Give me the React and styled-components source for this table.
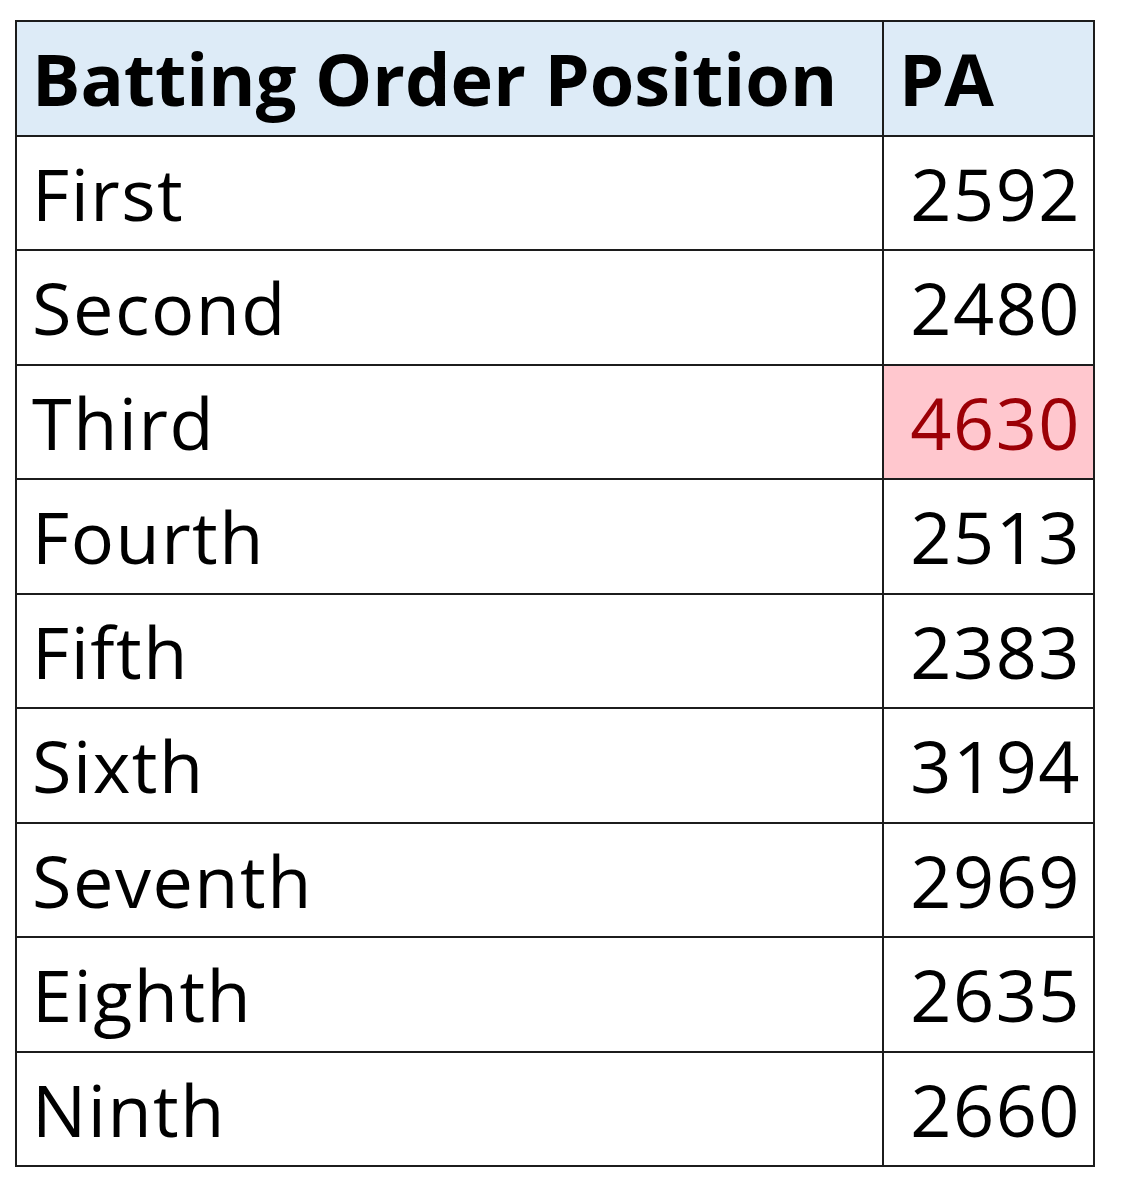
import React from 'react';
import styled, { createGlobalStyle } from 'styled-components';

const GlobalStyle = createGlobalStyle`
  body {
    margin: 0;
    background: #ffffff;
    font-family: 'Open Sans', 'Liberation Sans', sans-serif;
  }
`;

const Page = styled.div`
  padding: 20px 0 0 15px;
`;

const Table = styled.table`
  border-collapse: collapse;
  width: 1080px;
  table-layout: fixed;
`;

const Row = styled.tr`
  height: 114.5px;
`;

const HeadCell = styled.th`
  background: #ddebf7;
  border: 2px solid #1c1c1c;
  font-weight: 700;
  font-size: 72px;
  letter-spacing: 0;
  text-align: left;
  padding: 0 0 0 15px;
  color: #000;
  line-height: 1;
`;

const Cell = styled.td`
  border: 2px solid #1c1c1c;
  font-size: 72px;
  letter-spacing: 1.5px;
  text-align: ${({ $num }) => ($num ? 'right' : 'left')};
  padding: ${({ $num }) => ($num ? '0 12px 0 0' : '0 0 0 15px')};
  background: ${({ $bad }) => ($bad ? '#ffc7ce' : '#ffffff')};
  color: ${({ $bad }) => ($bad ? '#9c0006' : '#000000')};
  line-height: 1;
`;

const rows = [
  ['First', 2592],
  ['Second', 2480],
  ['Third', 4630],
  ['Fourth', 2513],
  ['Fifth', 2383],
  ['Sixth', 3194],
  ['Seventh', 2969],
  ['Eighth', 2635],
  ['Ninth', 2660],
];

export default function App() {
  return (
    <Page>
      <GlobalStyle />
      <Table>
        <colgroup>
          <col style={{ width: 867 }} />
          <col />
        </colgroup>
        <thead>
          <Row>
            <HeadCell>Batting Order Position</HeadCell>
            <HeadCell>PA</HeadCell>
          </Row>
        </thead>
        <tbody>
          {rows.map(([name, pa]) => (
            <Row key={name}>
              <Cell>{name}</Cell>
              <Cell $num $bad={name === 'Third'}>{pa}</Cell>
            </Row>
          ))}
        </tbody>
      </Table>
    </Page>
  );
}
